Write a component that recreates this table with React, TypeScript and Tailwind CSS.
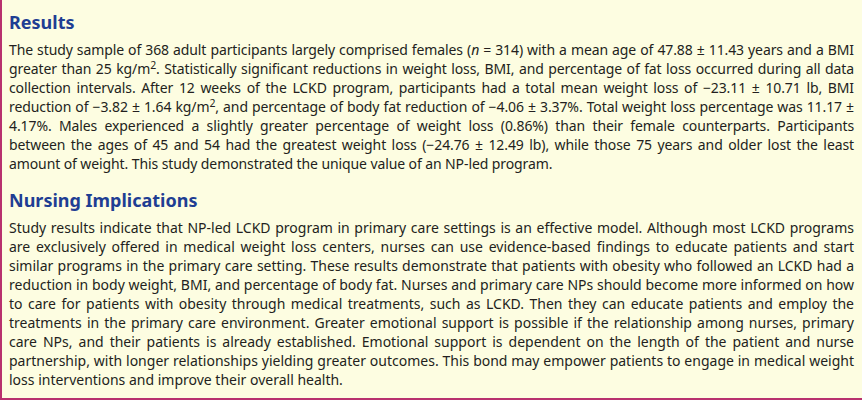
export default function App() {
  return (
    <div className="w-[862px] h-[400px] bg-white font-['Noto_Sans',sans-serif]">
      <div className="h-full bg-[#fdfde1] border-l-2 border-b-2 border-[#b8316e] pl-[7px] pr-[8px] pt-[10px]">
        <section>
          <h2 className="text-[18px] leading-[24px] font-bold text-[#1f3e93]">Results</h2>
          <p className="mt-[6px] text-[14px] leading-[19px] tracking-[-0.1px] text-[#231f20] text-justify">
            The study sample of 368 adult participants largely comprised females (<i>n</i> = 314) with a mean age of
            47.88 ± 11.43 years and a BMI greater than 25 kg/m<sup>2</sup>. Statistically significant reductions in
            weight loss, BMI, and percentage of fat loss occurred during all data collection intervals. After 12 weeks
            of the LCKD program, participants had a total mean weight loss of −23.11 ± 10.71 lb, BMI reduction of
            −3.82 ± 1.64 kg/m<sup>2</sup>, and percentage of body fat reduction of −4.06 ± 3.37%. Total weight loss
            percentage was 11.17 ± 4.17%. Males experienced a slightly greater percentage of weight loss (0.86%) than
            their female counterparts. Participants between the ages of 45 and 54 had the greatest weight loss (−24.76
            ± 12.49 lb), while those 75 years and older lost the least amount of weight. This study demonstrated the
            unique value of an NP-led program.
          </p>
        </section>
        <section className="mt-[15px]">
          <h2 className="text-[18px] leading-[24px] font-bold text-[#1f3e93]">Nursing Implications</h2>
          <p className="mt-[6px] text-[14px] leading-[19px] text-[#231f20] text-justify">
            Study results indicate that NP-led LCKD program in primary care settings is an effective model. Although
            most LCKD programs are exclusively offered in medical weight loss centers, nurses can use evidence-based
            findings to educate patients and start similar programs in the primary care setting. These results
            demonstrate that patients with obesity who followed an LCKD had a reduction in body weight, BMI, and
            percentage of body fat. Nurses and primary care NPs should become more informed on how to care for patients
            with obesity through medical treatments, such as LCKD. Then they can educate patients and employ the
            treatments in the primary care environment. Greater emotional support is possible if the relationship
            among nurses, primary care NPs, and their patients is already established. Emotional support is dependent
            on the length of the patient and nurse partnership, with longer relationships yielding greater outcomes.
            This bond may empower patients to engage in medical weight loss interventions and improve their overall
            health.
          </p>
        </section>
      </div>
    </div>
  );
}
